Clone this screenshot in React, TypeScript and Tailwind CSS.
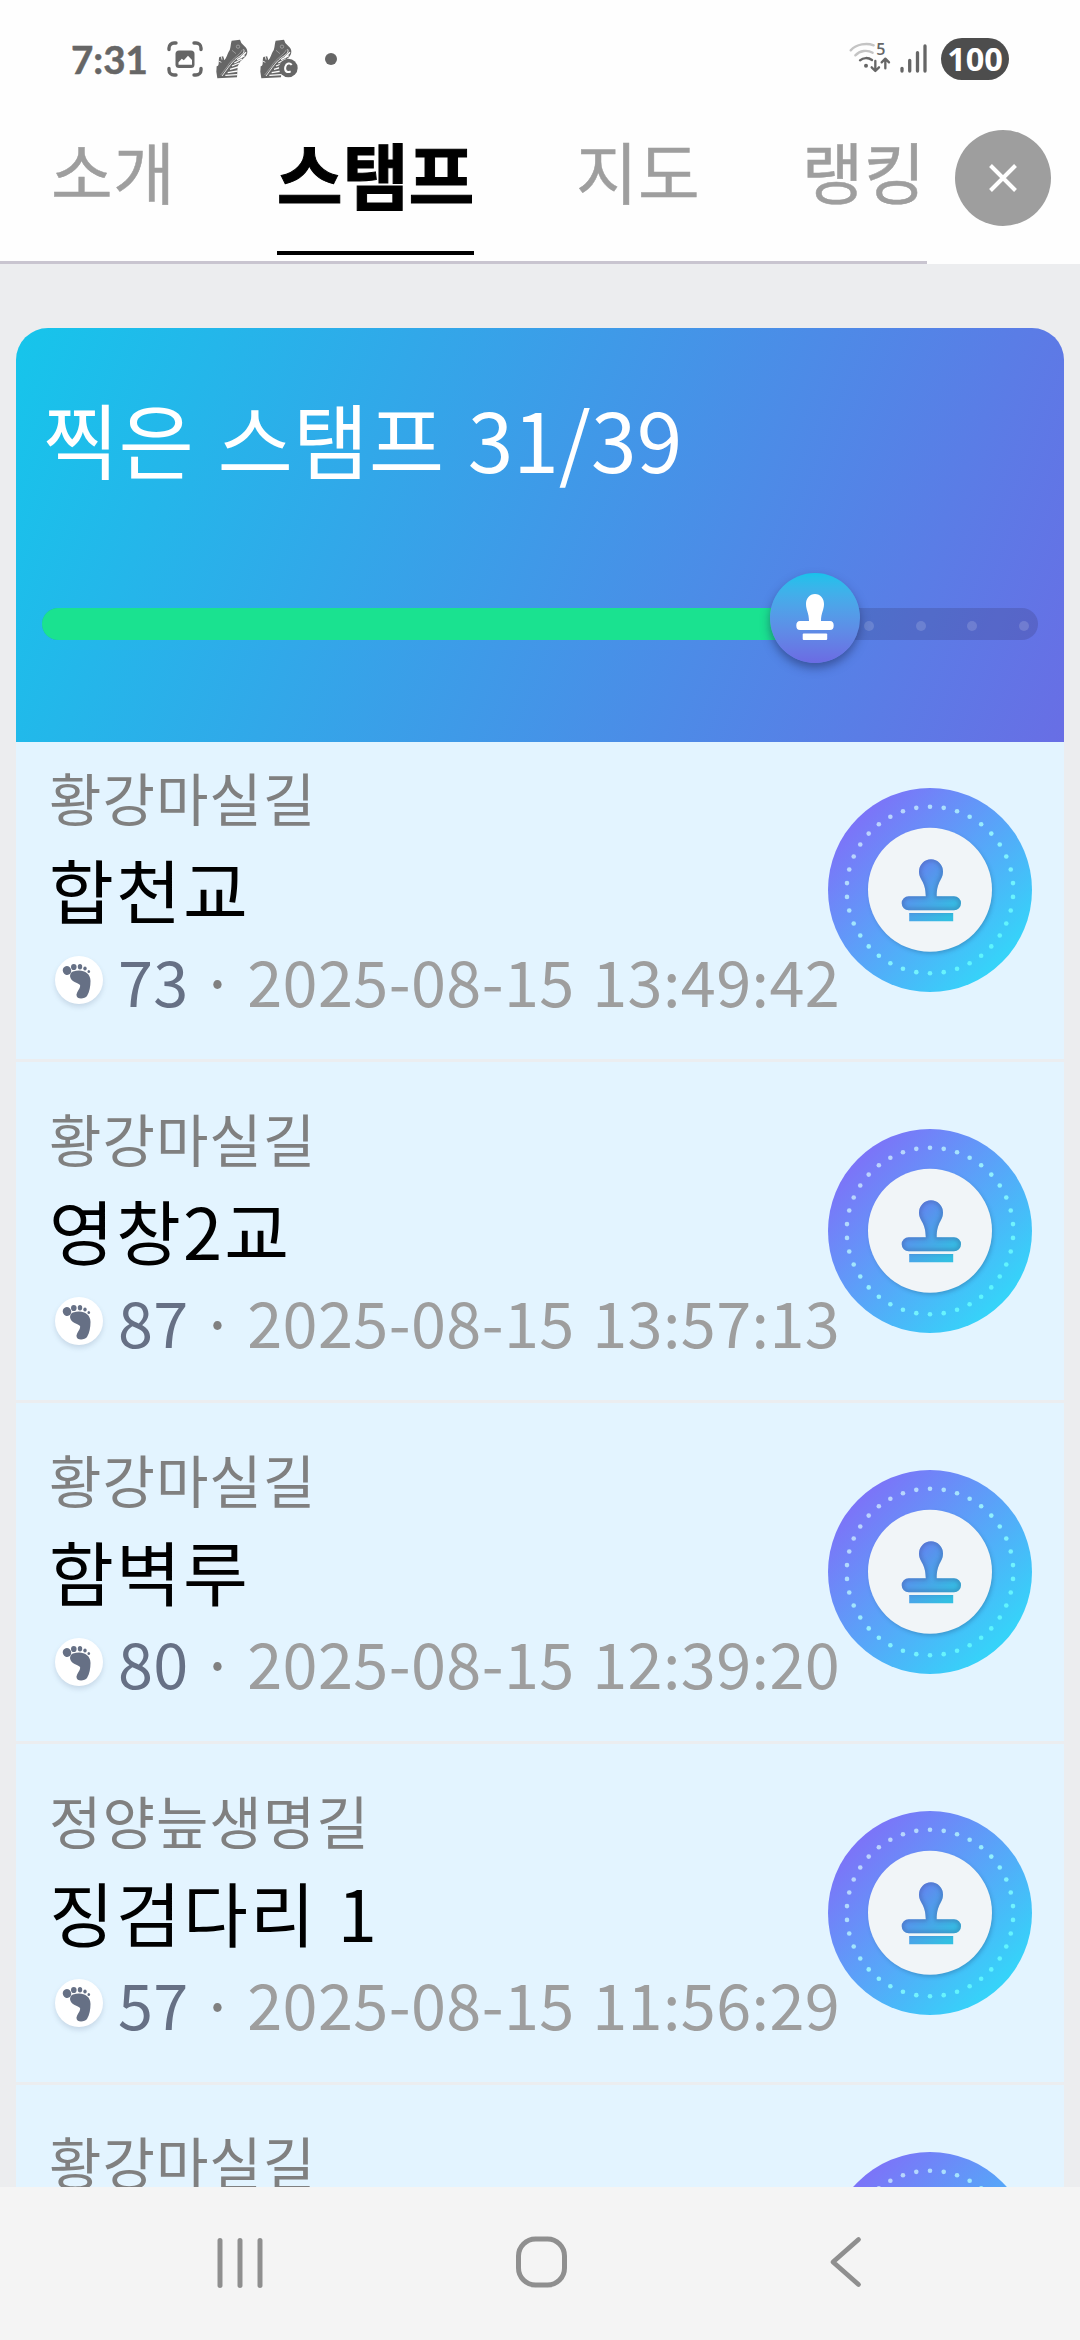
const KR = "font-['Noto_Sans_CJK_KR','Noto_Sans',sans-serif]";

type Stamp = { course: string; place: string; steps: string; time: string };

const stamps: Stamp[] = [
  { course: "황강마실길", place: "합천교", steps: "73", time: "2025-08-15 13:49:42" },
  { course: "황강마실길", place: "영창2교", steps: "87", time: "2025-08-15 13:57:13" },
  { course: "황강마실길", place: "함벽루", steps: "80", time: "2025-08-15 12:39:20" },
  { course: "정양늪생명길", place: "징검다리 1", steps: "57", time: "2025-08-15 11:56:29" },
  { course: "황강마실길", place: "", steps: "", time: "" },
];

function CaptureIcon() {
  return (
    <svg className="ml-[20px] h-[36px] w-[36px] shrink-0" viewBox="0 0 36 36" fill="none">
      <g stroke="#666666" strokeWidth="3.4" strokeLinecap="round">
        <path d="M2 8.5V7a5 5 0 0 1 5-5h2" />
        <path d="M27 2h2a5 5 0 0 1 5 5v1.500" />
        <path d="M34 27.500V29a5 5 0 0 1-5 5h-2" />
        <path d="M9 34H7a5 5 0 0 1-5-5v-1.500" />
      </g>
      <rect x="8.500" y="9.500" width="19" height="17.500" rx="3.500" fill="#666666" />
      <path d="M11.500 23.800v-2.500l3.300-3.500 2 1.500 4.200-4.500 4 4.200v4.800z" fill="#fefefe" />
    </svg>
  );
}

function Shoe() {
  return (
    <g>
      <path d="M513 45 538 42 542 52 556 66C563 76 561 88 549 98L538 108 531 122 529 155 470 158 467 138 468 122C478 120 472 106 476 94L488 92 491 104C498 96 500 86 504 78 511 70 509 56 513 45Z" fill="#666666" />
      <path d="M549 71C553 78 546 86 538 91 516 103 502 127 484 151" fill="none" stroke="#fefefe" strokeWidth="2.500" />
      <path d="M545 72C538 88 514 98 500 122L480 148" fill="none" stroke="#c8c8c8" strokeWidth="1.500" />
      <g stroke="#fefefe" strokeWidth="4">
        <path d="M541 95 556 80" />
        <path d="M529 102 552 90" />
        <path d="M521 112 544 100" />
        <path d="M514 121 536 112" />
        <path d="M508 131 532 124" />
        <path d="M501 141 531 136" />
        <path d="M494 149 530 147" />
      </g>
      <path d="M489 88 492 100M482 92 484 102M474 106 482 110" stroke="#fefefe" strokeWidth="2.500" />
      <circle cx="532" cy="63" r="5" fill="none" stroke="#b4b4b4" strokeWidth="2" />
      <path d="M514 74 526 84" stroke="#b4b4b4" strokeWidth="2" />
    </g>
  );
}

function ShoeIcon() {
  return (
    <svg className="ml-[13px] h-[40px] w-[32px] shrink-0" viewBox="466 40 96 120">
      <Shoe />
    </svg>
  );
}

function ShoeBadgeIcon() {
  return (
    <svg className="ml-[12px] h-[40px] w-[38px] shrink-0" viewBox="466 40 114 120">
      <Shoe />
      <circle cx="551" cy="127" r="28" fill="#666666" />
      <path d="M561 118C556 110 545 113 542 123 539 136 547 143 558 137" fill="none" stroke="#fefefe" strokeWidth="6" />
    </svg>
  );
}

function WifiIcon() {
  return (
    <svg className="h-[40px] w-[42px] shrink-0" viewBox="24 46 126 120" fill="none">
      <g strokeWidth="7" strokeLinecap="round">
        <path d="M29 80C47 61 77 57 98 65" stroke="#c4c4c4" />
        <path d="M43 95C57 80 79 78 95 87" stroke="#c4c4c4" />
        <path d="M57 110C67 101 82 101 93 109" stroke="#666666" />
      </g>
      <circle cx="75" cy="126" r="6" fill="#666666" />
      <g stroke="#666666" strokeWidth="7" strokeLinecap="round" strokeLinejoin="round">
        <path d="M103 112V141M92 131 103 142 114 131" />
        <path d="M133 134V106M122 116 133 105 144 116" />
      </g>
      <text x="106" y="95" fontSize="48" fontWeight="600" fill="#666666" fontFamily="'Open Sans', sans-serif">
        5
      </text>
    </svg>
  );
}

function SignalIcon() {
  return (
    <svg className="ml-[8px] h-[30px] w-[28px] shrink-0" viewBox="0 0 28 30">
      <g stroke="#666666" strokeWidth="3.300" strokeLinecap="round">
        <path d="M3 24.500V27" />
        <path d="M10.700 16.500V27" />
        <path d="M18.500 8.700V27" />
        <path d="M26 2V27" />
      </g>
    </svg>
  );
}

function StatusBar() {
  return (
    <div className="flex h-[117px] items-center bg-[#fefefe] pr-[71px] pl-[71px]">
      <span className="w-[76px] font-['Lato',sans-serif] text-[38.5px] leading-[44px] font-bold whitespace-nowrap text-[#666666] [-webkit-text-stroke:0.5px_#666666]">
        7:31
      </span>
      <CaptureIcon />
      <ShoeIcon />
      <ShoeBadgeIcon />
      <span className="ml-[27px] size-[12px] rounded-full bg-[#666666]" />
      <div className="ml-auto flex items-center">
        <WifiIcon />
        <SignalIcon />
        <span className="ml-[14px] flex h-[42px] w-[68px] items-center justify-center rounded-full bg-[#4d4d4d] font-['Open_Sans',sans-serif] text-[32.5px] leading-[42px] font-bold text-white">
          100
        </span>
      </div>
    </div>
  );
}

function Tabs() {
  const idle = "mt-[3px] text-[67px] leading-[100px] tracking-[0.5px] text-[#9e9e9e] [-webkit-text-stroke:0.5px_#9e9e9e]";
  return (
    <div className="flex h-[147px] bg-[#fefefe]">
      <nav className="flex w-[927px] items-start gap-[101.5px] overflow-hidden border-b-[3px] border-[#c9c5d0] pl-[51px] whitespace-nowrap">
        <span className={idle}>소개</span>
        <span className="mt-[6px] flex flex-col text-[71.6px] leading-[100px] font-bold text-black [-webkit-text-stroke:1px_#000000]">
          스탬프
          <span className="mt-[28px] h-[4px] bg-black" />
        </span>
        <span className={idle}>지도</span>
        <span className={idle}>랭킹</span>
      </nav>
      <button className="mt-[13px] ml-[28px] flex size-[96px] items-center justify-center rounded-full bg-[#9e9e9e]">
        <svg className="size-[28px]" viewBox="0 0 28 28">
          <path d="M1.500 1.500 26.500 26.500M26.500 1.500 1.500 26.500" stroke="#ffffff" strokeWidth="4" />
        </svg>
      </button>
    </div>
  );
}

function ProgressCard() {
  return (
    <section className="relative z-10 h-[414px] rounded-t-[32px] bg-[linear-gradient(111.6deg,#16c5eb_0%,#686ee5_100%)] pt-[50px]">
      <h1 className="pl-[27px] text-[82px] leading-[120px] tracking-[0.1px] whitespace-nowrap text-white [word-spacing:5px]">찍은 스탬프 31/39</h1>
      <div className="relative mx-[26px] mt-[110px] flex h-[32px] rounded-full bg-[rgba(50,50,100,0.22)]">
        <div className="w-[773px] rounded-l-full bg-[#1ae290]" />
        <div className="flex flex-1 items-center justify-between pt-[3px] pr-[9px] pl-[49px]">
          {[0, 1, 2, 3].map((i) => (
            <span key={i} className="size-[10px] rounded-full bg-white/15" />
          ))}
        </div>
        <div className="absolute top-[-35px] left-[728px] size-[90px] rounded-full bg-linear-to-b from-[#17c2eb] to-[#6b6be3] shadow-[0_5px_10px_rgba(30,40,90,0.5)]">
          <svg className="size-[90px]" viewBox="0 0 90 90" fill="#ffffff">
            <path d="M45 21C50.500 21 54 25.500 54 31 54 37 51 40 51 48H60C62.500 48 63.700 49.500 63.700 52.500S62.500 57 60 57H30C27.500 57 26.300 55.500 26.300 52.500S27.500 48 30 48H39C39 40 36 37 36 31 36 25.500 39.500 21 45 21Z" />
            <rect x="32.700" y="60.500" width="24.500" height="6.500" rx="1" />
          </svg>
        </div>
      </div>
    </section>
  );
}

const DOTS = Array.from({ length: 38 }, (_, i) => {
  const a = (i / 38) * Math.PI * 2;
  return { x: 102 + 83.3 * Math.sin(a), y: 102 - 83.3 * Math.cos(a) };
});

function StampBadge() {
  return (
    <svg className="size-[204px] shrink-0" viewBox="0 0 204 204">
      <defs>
        <linearGradient id="ring" gradientUnits="userSpaceOnUse" x1="32" y1="32" x2="172" y2="172">
          <stop offset="0" stopColor="#7b75f8" />
          <stop offset="1" stopColor="#36d3f9" />
        </linearGradient>
        <linearGradient id="dots" gradientUnits="userSpaceOnUse" x1="42" y1="42" x2="162" y2="162">
          <stop offset="0" stopColor="#bcd2fd" />
          <stop offset="0.500" stopColor="#93f0fd" />
          <stop offset="1" stopColor="#5cf5fd" />
        </linearGradient>
        <linearGradient id="mark" gradientUnits="userSpaceOnUse" x1="82" y1="76" x2="128" y2="122">
          <stop offset="0" stopColor="#6a7ef2" />
          <stop offset="1" stopColor="#33bfe2" />
        </linearGradient>
        <clipPath id="markClip">
          <path d="M103 71.300A12 12 0 0 1 115 83.500C115 92 108.700 93 108.700 108.300H126A7 7 0 0 1 126 122.300H80.700A7 7 0 0 1 80.700 108.300H97.800C97.800 93 91 92 91 83.500A12 12 0 0 1 103 71.300ZM81.200 125H125.200V133.200H81.200Z" />
        </clipPath>
        <filter id="soft" x="-30%" y="-30%" width="160%" height="160%">
          <feGaussianBlur stdDeviation="2" />
        </filter>
      </defs>
      <circle cx="102" cy="102" r="102" fill="url(#ring)" />
      {DOTS.map((d, i) => (
        <circle key={i} cx={d.x} cy={d.y} r="2.300" fill="url(#dots)" />
      ))}
      <circle cx="103.500" cy="104" r="61.500" fill="#24507e" opacity="0.350" filter="url(#soft)" />
      <circle cx="102" cy="101.800" r="62" fill="#f1f5f8" />
      <g clipPath="url(#markClip)">
        <rect x="70" y="68" width="66" height="68" fill="url(#mark)" />
        <path
          d="M103 71.300A12 12 0 0 1 115 83.500C115 92 108.700 93 108.700 108.300H126A7 7 0 0 1 126 122.300H80.700A7 7 0 0 1 80.700 108.300H97.800C97.800 93 91 92 91 83.500A12 12 0 0 1 103 71.300Z"
          fill="none"
          stroke="#3d5a9a"
          strokeWidth="3"
          opacity="0.600"
          filter="url(#soft)"
        />
      </g>
    </svg>
  );
}

function FootIcon() {
  return (
    <span className="flex size-[48px] shrink-0 rounded-full bg-white shadow-[0_3px_5px_rgba(90,110,140,0.2)]">
      <svg className="size-[48px] blur-[0.6px]" viewBox="0 0 48 48" fill="#667085">
        <path d="M18 15.500C26 12.500 35.500 15.500 35.500 25 35.500 30 34.500 36 32 40 30 43 21 44 21.500 38.500 22 35 26 32 25 29 23.500 27 15.500 26 15 20 15.300 17.500 16.500 16 18 15.500Z" />
        <ellipse cx="12" cy="14.500" rx="4.200" ry="4.500" transform="rotate(-25 12 14.500)" />
        <ellipse cx="18.800" cy="11" rx="2.800" ry="3.100" />
        <ellipse cx="25" cy="10.800" rx="2.200" ry="2.700" />
        <ellipse cx="30" cy="12.500" rx="1.700" ry="2" />
        <ellipse cx="33.800" cy="15.500" rx="1.300" ry="1.600" />
      </svg>
    </span>
  );
}

function StampRow({ stamp }: { stamp: Stamp }) {
  return (
    <li className="flex h-[341px] items-start border-b-[3px] border-[#ebedf0] bg-[#e3f4ff] pr-[32px] pl-[33px] whitespace-nowrap">
      <div className="w-[779px] shrink-0 pt-[35px]">
        <p className="h-[80px] text-[57px] leading-[80px] tracking-[1px] text-[#808080]">{stamp.course}</p>
        {stamp.place && (
          <>
            <p className="h-[104px] text-[70.5px] leading-[104px] tracking-[2.1px] text-black [word-spacing:3px]">{stamp.place}</p>
            <div className="flex h-[80px] items-center text-[63px] leading-[80px] tracking-[0.4px] text-[#9e9e9e] [word-spacing:3px]">
              <span className="ml-[6px] flex w-[63px] shrink-0">
                <FootIcon />
              </span>
              <span className="shrink-0 text-[#667085]">{stamp.steps}</span>
              <span className="w-[58.5px] shrink-0 text-center text-[#808080]">·</span>
              <span className="shrink-0">{stamp.time}</span>
            </div>
          </>
        )}
      </div>
      <div className="mt-[67px]">
        <StampBadge />
      </div>
    </li>
  );
}

function NavBar() {
  return (
    <div className="flex h-[153px] shrink-0 items-start bg-[#f4f4f4] pt-[46px]">
      <svg className="ml-[210px] h-[58px] w-[60px]" viewBox="0 0 60 58">
        <path d="M10 7.500V52.500M30 7.500V52.500M50 7.500V52.500" stroke="#8f8f8f" strokeWidth="5" strokeLinecap="round" />
      </svg>
      <svg className="ml-[242px] h-[58px] w-[60px]" viewBox="0 0 60 58">
        <rect x="6.500" y="6" width="46" height="46" rx="17" fill="none" stroke="#8f8f8f" strokeWidth="5" />
      </svg>
      <svg className="ml-[243px] h-[58px] w-[60px]" viewBox="0 0 60 58">
        <path d="M43.500 6.500 18 29 43.500 51.500" fill="none" stroke="#8f8f8f" strokeWidth="4.800" strokeLinecap="round" strokeLinejoin="round" />
      </svg>
    </div>
  );
}

export default function App() {
  return (
    <div className={`flex h-[2340px] w-[1080px] flex-col overflow-hidden bg-[#ecedef] ${KR}`}>
      <StatusBar />
      <Tabs />
      <main className="min-h-0 flex-1 overflow-hidden px-[16px] pt-[64px]">
        <ProgressCard />
        <ul className="-mt-[21px]">
          {stamps.map((s, i) => (
            <StampRow key={i} stamp={s} />
          ))}
        </ul>
      </main>
      <NavBar />
    </div>
  );
}
